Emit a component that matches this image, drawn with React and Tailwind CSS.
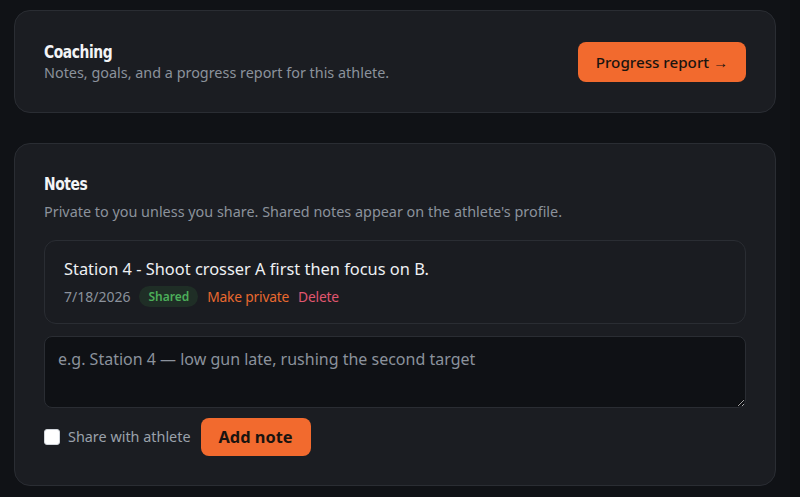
import React from "react";

const body = { fontFamily: '"Segoe UI", "Noto Sans", "Open Sans", sans-serif' };
const head = { fontFamily: '"DejaVu Sans Condensed", "DejaVu Sans", sans-serif', fontStretch: "condensed" };

export default function App() {
  return (
    <div className="min-h-[497px] w-full bg-[#0e1013]" style={body}>
      <div className="w-[790px] bg-[#101216] px-[14px] pt-[10px] pb-[12px] flex flex-col gap-[30px]">
        <section className="h-[103px] rounded-[16px] border border-[#2a2d33] bg-[#1b1d22] pl-[29px] pr-[29px] flex items-center justify-between">
          <div className="flex flex-col pt-[1px]">
            <h2 className="origin-left scale-x-[0.88] text-[17.5px] leading-[22px] font-bold text-[#f3f4f6] tracking-[-0.5px]" style={head}>Coaching</h2>
            <p className="text-[14.4px] leading-[20px] text-[#8b929c]">Notes, goals, and a progress report for this athlete.</p>
          </div>
          <button className="h-[40px] w-[168px] rounded-[8px] bg-[#f26a2e] pt-[1px] text-[15.2px] font-medium text-[#1a1410] flex items-center justify-center">
            Progress report →
          </button>
        </section>

        <section className="rounded-[16px] border border-[#2a2d33] bg-[#1b1d22] px-[29px] pt-[29px] pb-[29px] flex flex-col">
          <h2 className="origin-left scale-x-[0.88] text-[17.5px] leading-[22px] font-bold text-[#f3f4f6] tracking-[-0.5px]" style={head}>Notes</h2>
          <p className="mt-[7px] text-[14.4px] leading-[20px] text-[#8b929c]">Private to you unless you share. Shared notes appear on the athlete's profile.</p>

          <div className="mt-[18px] h-[84px] rounded-[12px] border border-[#2a2d33] bg-[#1a1c21] px-[19px] pt-[17px]">
            <div className="text-[16.4px] leading-[22px] text-[#eef0f3]">Station 4 - Shoot crosser A first then focus on B.</div>
            <div className="mt-[6px] flex items-center text-[14px] leading-[20px]">
              <span className="text-[#8b929c]">7/18/2026</span>
              <span className="ml-[9px] rounded-full bg-[#1f2e26] px-[9px] h-[21px] flex items-center text-[12px] font-semibold text-[#4cae5a]">Shared</span>
              <span className="ml-[9px] text-[13.8px] tracking-[-0.2px] text-[#e8692f]">Make private</span>
              <span className="ml-[9px] text-[13.8px] tracking-[-0.2px] text-[#e0566f]">Delete</span>
            </div>
          </div>

          <textarea
            className="mt-[12px] h-[72px] w-full resize-y rounded-[8px] border border-[#2a2d33] bg-[#0f1115] px-[13px] py-[10px] text-[16px] leading-[24px] text-[#e5e7eb] placeholder:text-[#8b929c] outline-none"
            placeholder="e.g. Station 4 — low gun late, rushing the second target"
            style={body}
          />

          <div className="mt-[10px] flex items-center">
            <label className="flex items-center">
              <span className="h-[16px] w-[16px] rounded-[3px] bg-white border border-[#d1d5db]" />
              <span className="ml-[8px] text-[14.4px] text-[#9aa1ab]">Share with athlete</span>
            </label>
            <button className="ml-[10px] h-[38px] w-[110px] rounded-[8px] bg-[#f26a2e] text-[16.4px] font-bold text-[#1a1410]">
              Add note
            </button>
          </div>
        </section>
      </div>
    </div>
  );
}
